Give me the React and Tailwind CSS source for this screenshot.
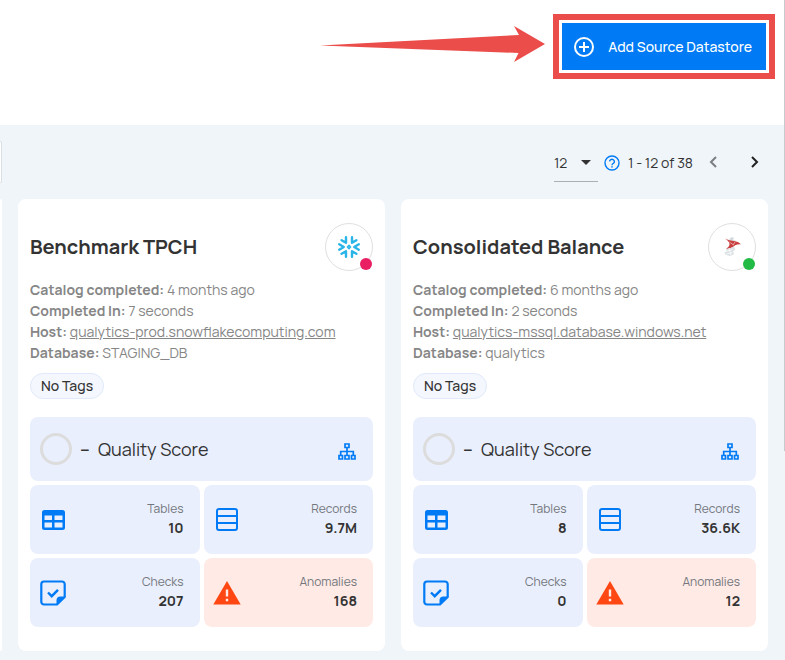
import React from "react";

const datastores = [
  {
    name: "Benchmark TPCH",
    kind: "snowflake",
    status: "bg-[#e91e63]",
    completed: "4 months ago",
    duration: "7 seconds",
    host: "qualytics-prod.snowflakecomputing.com",
    database: "STAGING_DB",
    tables: "10",
    records: "9.7M",
    checks: "207",
    anomalies: "168",
  },
  {
    name: "Consolidated Balance",
    kind: "mssql",
    status: "bg-[#21ba45]",
    completed: "6 months ago",
    duration: "2 seconds",
    host: "qualytics-mssql.database.windows.net",
    database: "qualytics",
    tables: "8",
    records: "36.6K",
    checks: "0",
    anomalies: "12",
  },
];

function PlusCircleIcon() {
  return (
    <svg className="size-6" viewBox="0 0 24 24" fill="none" stroke="currentColor" strokeWidth="2" aria-hidden="true">
      <circle cx="12" cy="12" r="9" />
      <path d="M12 7v10M7 12h10" />
    </svg>
  );
}

function HelpIcon() {
  return (
    <svg className="size-4" viewBox="0 0 16 16" aria-hidden="true">
      <circle cx="8" cy="8" r="7" fill="none" stroke="#007bf5" strokeWidth="1.4" />
      <path d="M5.6 6.4a2.4 2.2 0 1 1 3.900 1.800C8.600 8.900 8 9.100 8 10.200" fill="none" stroke="#007bf5" strokeWidth="1.4" />
      <rect x="7.3" y="11.2" width="1.4" height="1.4" fill="#007bf5" />
    </svg>
  );
}

function Chevron({ d }) {
  return (
    <svg className="h-3 w-2" viewBox="0 0 8 12" fill="none" stroke="currentColor" strokeWidth="2" aria-hidden="true">
      <path d={d} />
    </svg>
  );
}

function SnowflakeIcon() {
  return (
    <svg className="size-6" viewBox="0 0 24 24" fill="none" stroke="#29b5e8" strokeWidth="2.4" strokeLinecap="round" strokeLinejoin="round" aria-hidden="true">
      <path d="M9 2.200v5.600L4.600 5.200" />
      <path d="M15 2.200v5.600l4.400-2.600" />
      <path d="M9 21.800v-5.600l-4.400 2.600" />
      <path d="M15 21.800v-5.600l4.400 2.600" />
      <path d="M2.200 9.300L6.800 12l-4.600 2.700" />
      <path d="M21.800 9.300L17.200 12l4.600 2.700" />
      <path d="M12 10.400l1.600 1.600-1.600 1.600-1.600-1.600z" strokeWidth="1.500" />
    </svg>
  );
}

function SqlServerIcon() {
  return (
    <svg className="size-6" viewBox="0 0 24 24" aria-hidden="true">
      <path d="M9 4l3-2 2 1-1 2 4 1-5 1z" fill="#d5dadd" />
      <path d="M5 3.500C8 5 11 5.800 15 6.200c2.500.3 4.500 1.500 6 3.300-3-.5-5 .2-7 1.700-2 1.300-4.500 2.300-8 2.800 2-1.500 3.500-3 3.500-5S7.500 5.200 5 3.500z" fill="#c8403f" />
      <path d="M9.500 7l4 3M15 7l-2 3" stroke="#fff" strokeWidth=".5" fill="none" />
      <path d="M6 14.500l4-1.200 4-1.800 1 3-2 2 1 2.500-3.500 2-4.500-1-1.500-2.500 2-1z" fill="#d9dfe2" />
      <path d="M6 16.500l7-2M6.500 19l6-1.500M9 13.500l2 7" stroke="#fff" strokeWidth=".8" fill="none" />
    </svg>
  );
}

function SitemapIcon() {
  return (
    <svg className="h-[17px] w-[18px]" viewBox="0 0 18 17" fill="none" stroke="#007bf5" strokeWidth="1.7" aria-hidden="true">
      <path d="M7 1h4v3.500H7zM1 12.500h3.500V16H1zM7 12.500h4V16H7zM13.500 12.500H17V16h-3.500zM9 4.500v8M2.700 12.500V8.500h12.600v4" />
    </svg>
  );
}

function TableIcon() {
  return (
    <svg className="h-5 w-[23px]" viewBox="0 0 23 20" aria-hidden="true">
      <path
        fillRule="evenodd"
        fill="#007bf5"
        d="M2.500 0h18A2.500 2.500 0 0 1 23 2.500v15a2.500 2.500 0 0 1-2.500 2.500h-18A2.500 2.500 0 0 1 0 17.500v-15A2.500 2.500 0 0 1 2.500 0zM2.500 5.500V10H10V5.500zM12.500 5.500V10h8V5.500zM2.500 12.500v5H10v-5zM12.500 12.500v5h8v-5z"
      />
    </svg>
  );
}

function RecordsIcon() {
  return (
    <svg className="h-[23px] w-[22px]" viewBox="0 0 22 23" fill="none" stroke="#007bf5" strokeWidth="2" aria-hidden="true">
      <rect x="1" y="1" width="20" height="21" rx="2" />
      <path d="M1 8h20M1 15h20" />
    </svg>
  );
}

function ChecksIcon() {
  return (
    <svg className="size-[26px]" viewBox="0 0 26 26" aria-hidden="true">
      <path d="M4 1.500h18A2.700 2.700 0 0 1 24.700 4.200V17L17 24.500H4A2.700 2.700 0 0 1 1.300 21.800V4.200A2.700 2.700 0 0 1 4 1.500z" fill="none" stroke="#007bf5" strokeWidth="2.200" strokeLinejoin="round" />
      <path d="M16.500 25v-4.500a4 4 0 0 1 4-4h5z" fill="#007bf5" />
      <path d="M8 12.500l3.700 3.700 6.300-6.400" fill="none" stroke="#007bf5" strokeWidth="2.400" />
    </svg>
  );
}

function WarningIcon() {
  return (
    <svg className="h-6 w-7" viewBox="0 0 28 24" aria-hidden="true">
      <path d="M14 0L27.700 23.500H.3z" fill="#ff4713" />
      <path d="M12.800 8.500h2.400v7h-2.400zM12.800 17.800h2.400v2.400h-2.400z" fill="#ffeae5" />
    </svg>
  );
}

function Stat({ icon, label, value, tone = "bg-[#e9effc]" }) {
  return (
    <div className={`flex h-[69px] items-center justify-between rounded-lg pr-4 pl-2 ${tone}`}>
      <div className="flex w-[30px] justify-center">{icon}</div>
      <dl className="pb-1 text-right">
        <dt className="text-xs leading-5 text-[#73777d]">{label}</dt>
        <dd className="text-sm leading-[18px] font-bold text-[#333]">{value}</dd>
      </dl>
    </div>
  );
}

function DatastoreCard({ store }) {
  return (
    <article className="min-w-0 rounded-lg bg-white px-3 py-6">
      <header className="flex items-center justify-between">
        <h2 className="text-xl font-bold text-[#333]">{store.name}</h2>
        <div className="relative flex size-12 items-center justify-center rounded-full border border-[#e0e0e0]">
          {store.kind === "snowflake" ? <SnowflakeIcon /> : <SqlServerIcon />}
          <span className={`absolute right-0 bottom-0 size-3 rounded-full ${store.status}`} />
        </div>
      </header>
      <div className="mt-2 text-sm leading-[21px] text-[#868686]">
        <p><b className="font-bold">Catalog completed:</b> {store.completed}</p>
        <p><b className="font-bold">Completed In:</b> {store.duration}</p>
        <p><b className="font-bold">Host:</b> <a href="#host" className="underline">{store.host}</a></p>
        <p><b className="font-bold">Database:</b> {store.database}</p>
      </div>
      <div className="mt-[10px] flex">
        <span className="rounded-full border border-[#e0eafa] bg-[#f4f7fd] px-[10px] text-sm leading-6 font-medium text-[#333]">No Tags</span>
      </div>
      <div className="mt-[18px] flex h-16 items-center rounded-lg bg-[#e9effc] pr-[17px] pl-[10px] text-lg text-[#333]">
        <span className="size-8 rounded-full border-3 border-[#dcdcdc]" />
        <span className="ml-2 w-[18px] font-semibold">–</span>
        <span>Quality Score</span>
        <a href="#lineage" aria-label="Lineage" className="mt-1 ml-auto"><SitemapIcon /></a>
      </div>
      <div className="mt-1 grid grid-cols-2 gap-1">
        <Stat icon={<TableIcon />} label="Tables" value={store.tables} />
        <Stat icon={<RecordsIcon />} label="Records" value={store.records} />
        <Stat icon={<ChecksIcon />} label="Checks" value={store.checks} />
        <Stat icon={<WarningIcon />} label="Anomalies" value={store.anomalies} tone="bg-[#ffeae5]" />
      </div>
    </article>
  );
}

export default function App() {
  return (
    <div className="relative min-h-screen bg-[#f0f5fa] font-['Manrope','Inter',sans-serif]">
      <header className="flex h-[125px] items-start justify-end gap-2 bg-white pt-[14px] pr-[10px]">
        <svg className="mt-3 h-9 w-[225px]" viewBox="0 0 225 36" aria-hidden="true">
          <path d="M0 19.500L199 9l-5-9 31 18-31 18 4.500-9z" fill="#eb4d4b" />
        </svg>
        <div className="border-6 border-[#eb4d4b] p-[3px]">
          <button type="button" className="flex h-[47px] items-center gap-3 bg-[#007bf5] pr-[14px] pl-[10px] text-sm font-medium text-white">
            <PlusCircleIcon />
            Add Source Datastore
          </button>
        </div>
      </header>

      <div className="flex h-[74px] items-start pt-4 pr-[26px]">
        <div className="h-[42px] w-[2px] rounded-r-sm border-y border-r border-[#dcdfe2] bg-white" />
        <div className="ml-auto flex items-start text-sm text-[#333]">
          <div className="relative w-11 border-b border-[#a9afb6]">
            <select aria-label="Rows per page" defaultValue="12" className="block h-10 w-full appearance-none bg-transparent pt-1">
              <option>12</option>
              <option>24</option>
            </select>
            <svg className="pointer-events-none absolute top-[19px] right-[7px] h-[5px] w-[10px]" viewBox="0 0 10 5" aria-hidden="true">
              <path d="M0 0h10L5 5z" fill="#333" />
            </svg>
          </div>
          <div className="ml-1 flex h-11 items-center gap-2 px-[2px]">
            <HelpIcon />
            <span>1 - 12 of 38</span>
          </div>
          <div className="ml-[14px] flex h-[42px] items-center gap-[34px]">
            <button type="button" aria-label="Previous page" className="text-[#7b7e82]"><Chevron d="M7 1L2 6l5 5" /></button>
            <button type="button" aria-label="Next page" className="text-[#222]"><Chevron d="M1 1l5 5-5 5" /></button>
          </div>
        </div>
      </div>

      <main className="grid grid-cols-[2px_1fr_1fr] gap-4 pr-[17px] pb-[9px]">
        <div className="rounded-tr-lg rounded-br-lg bg-white" />
        {datastores.map((store) => (
          <DatastoreCard key={store.name} store={store} />
        ))}
      </main>
      <div className="absolute top-0 right-0 h-[451px] w-px bg-[#c6cbd0]" />
    </div>
  );
}
